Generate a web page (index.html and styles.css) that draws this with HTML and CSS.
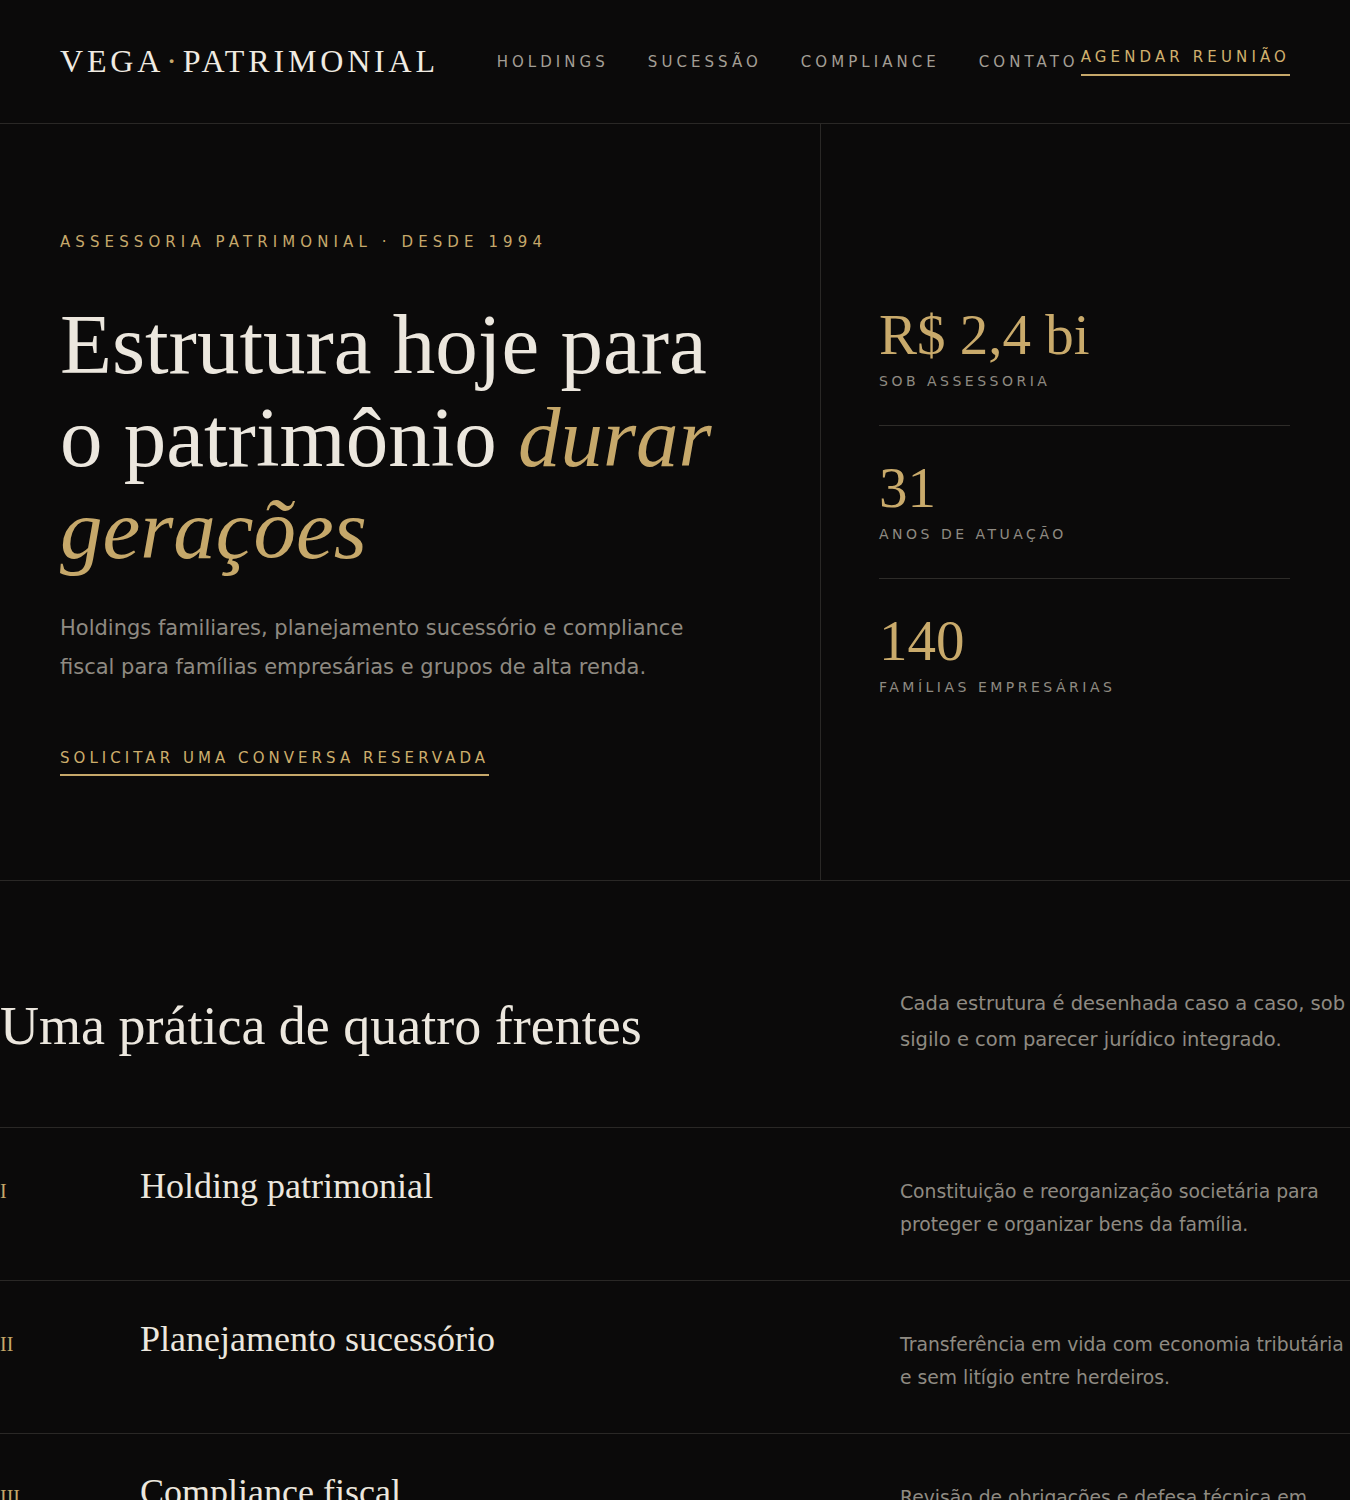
FILE: index.html
```html
<!DOCTYPE html>
<html lang="pt-BR">
<head>
<meta charset="utf-8">
<title>Vega Patrimonial</title>
<link rel="stylesheet" href="styles.css">
</head>
<body>
<header class="site-header">
  <div class="logo">VEGA<span class="logo-dot">·</span>PATRIMONIAL</div>
  <nav class="nav">
    <a href="#">HOLDINGS</a>
    <a href="#">SUCESSÃO</a>
    <a href="#">COMPLIANCE</a>
    <a href="#">CONTATO</a>
  </nav>
  <a class="nav-cta" href="#">AGENDAR REUNIÃO</a>
</header>

<section class="hero">
  <div class="hero-main">
    <p class="eyebrow">ASSESSORIA PATRIMONIAL · DESDE 1994</p>
    <h1 class="hero-title">Estrutura hoje para o patrimônio <em>durar gerações</em></h1>
    <p class="hero-lead">Holdings familiares, planejamento sucessório e compliance fiscal para famílias empresárias e grupos de alta renda.</p>
    <a class="hero-cta" href="#">SOLICITAR UMA CONVERSA RESERVADA</a>
  </div>
  <aside class="hero-stats">
    <div class="stat">
      <div class="stat-value">R$ 2,4 bi</div>
      <div class="stat-label">SOB ASSESSORIA</div>
    </div>
    <div class="stat">
      <div class="stat-value">31</div>
      <div class="stat-label">ANOS DE ATUAÇÃO</div>
    </div>
    <div class="stat">
      <div class="stat-value">140</div>
      <div class="stat-label">FAMÍLIAS EMPRESÁRIAS</div>
    </div>
  </aside>
</section>

<section class="practice">
  <div class="practice-head">
    <h2 class="practice-title">Uma prática de quatro frentes</h2>
    <p class="practice-intro">Cada estrutura é desenhada caso a caso, sob sigilo e com parecer jurídico integrado.</p>
  </div>
  <div class="practice-list">
    <div class="row">
      <span class="row-num">I</span>
      <h3 class="row-title">Holding patrimonial</h3>
      <p class="row-desc">Constituição e reorganização societária para proteger e organizar bens da família.</p>
    </div>
    <div class="row">
      <span class="row-num">II</span>
      <h3 class="row-title">Planejamento sucessório</h3>
      <p class="row-desc">Transferência em vida com economia tributária e sem litígio entre herdeiros.</p>
    </div>
    <div class="row">
      <span class="row-num">III</span>
      <h3 class="row-title">Compliance fiscal</h3>
      <p class="row-desc">Revisão de obrigações e defesa técnica em autuações e fiscalizações.</p>
    </div>
    <div class="row">
      <span class="row-num">IV</span>
      <h3 class="row-title">Governança familiar</h3>
      <p class="row-desc">Acordos, conselhos e protocolos para a continuidade do grupo.</p>
    </div>
  </div>
</section>
</body>
</html>
```

FILE: styles.css
```css
* { box-sizing: border-box; }

html, body {
  margin: 0;
  padding: 0;
  background: #0b0a0a;
  color: #ece7de;
}

body {
  font-family: "DejaVu Sans", sans-serif;
}

a { text-decoration: none; color: inherit; }

/* Header */
.site-header {
  height: 124px;
  padding: 0 60px;
  display: flex;
  align-items: center;
  border-bottom: 1px solid #2a2826;
}

.logo {
  font-family: "Liberation Serif", serif;
  font-size: 32px;
  letter-spacing: 0.12em;
  color: #f0ebe2;
  white-space: nowrap;
}

.logo-dot {
  color: #c6a86a;
  margin: 0 2px;
}

.nav {
  display: flex;
  gap: 39px;
  margin-left: auto;
}

.nav a {
  font-size: 15px;
  letter-spacing: 0.27em;
  color: #a39e95;
}

.nav-cta {
  margin-left: 2px;
  font-size: 15px;
  letter-spacing: 0.275em;
  color: #d0b06e;
  padding-bottom: 8px;
  border-bottom: 2px solid #c6a86a;
}

/* Hero */
.hero {
  display: grid;
  grid-template-columns: 821px 1fr;
  border-bottom: 1px solid #2a2826;
}

.hero-main {
  padding: 108px 60px 104px;
  border-right: 1px solid #2a2826;
}

.eyebrow {
  margin: 0;
  font-size: 15px;
  line-height: 21px;
  letter-spacing: 0.34em;
  color: #c6a86a;
}

.hero-title {
  margin: 45px 0 0;
  font-family: "Liberation Serif", serif;
  font-weight: normal;
  font-size: 85px;
  line-height: 92.5px;
  color: #ece7de;
}

.hero-title em {
  color: #c6a86a;
}

.hero-lead {
  margin: 33px 0 0;
  max-width: 660px;
  font-size: 21px;
  line-height: 39px;
  color: #8f8a82;
}

.hero-cta {
  display: inline-block;
  margin-top: 61px;
  font-size: 15px;
  line-height: 20px;
  letter-spacing: 0.27em;
  color: #cdae6c;
  padding-bottom: 6px;
  border-bottom: 2px solid #c6a86a;
}

.hero-stats {
  padding: 0 60px 0 58px;
  display: flex;
  flex-direction: column;
  justify-content: center;
}

.stat {
  padding: 34px 0;
  border-bottom: 1px solid #2e2c29;
}

.stat:last-child { border-bottom: none; }

.stat-value {
  font-family: "Liberation Serif", serif;
  font-size: 57px;
  line-height: 56px;
  color: #c9aa6b;
}

.stat-label {
  margin-top: 8px;
  font-size: 14px;
  line-height: 20px;
  letter-spacing: 0.25em;
  color: #8f8a82;
}

/* Practice */
.practice {
  padding-top: 105px;
}

.practice-head {
  display: grid;
  grid-template-columns: 2fr 1fr;
  align-items: end;
  margin-bottom: 69px;
}

.practice-title {
  margin: 0;
  font-family: "Liberation Serif", serif;
  font-weight: normal;
  font-size: 54px;
  line-height: 63px;
  color: #ece7de;
}

.practice-intro {
  margin: 0;
  font-size: 19.5px;
  line-height: 36px;
  color: #8f8a82;
}

.row {
  display: grid;
  grid-template-columns: 140px 1fr 450px;
  align-items: baseline;
  padding: 37px 0 39px;
  border-top: 1px solid #2a2826;
}

.row-num {
  font-family: "Liberation Serif", serif;
  font-size: 20px;
  color: #c6a86a;
}

.row-title {
  margin: 0;
  font-family: "Liberation Serif", serif;
  font-weight: normal;
  font-size: 36px;
  line-height: 42px;
  color: #ece7de;
}

.row-desc {
  margin: 0;
  font-size: 18.75px;
  line-height: 33px;
  color: #8f8a82;
}
```
